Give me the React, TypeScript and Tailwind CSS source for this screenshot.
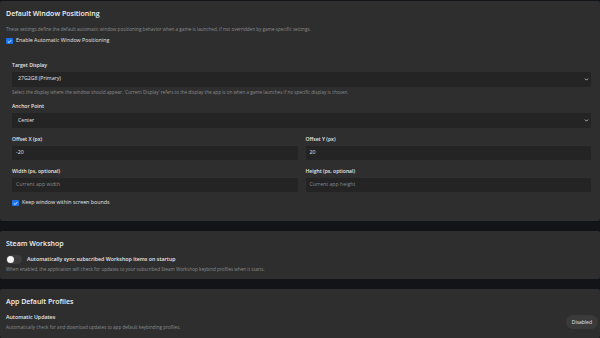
import { ChevronDown } from 'lucide-react';

const FONT = { fontFamily: '"Open Sans", "Noto Sans", sans-serif' };

function Check({ className = '' }: { className?: string }) {
  return (
    <span className={`flex h-[6.5px] w-[6.5px] shrink-0 items-center justify-center rounded-[1px] bg-[#1a73e8] ${className}`}>
      <svg viewBox="0 0 12 12" className="h-[5px] w-[5px]">
        <path d="M2.5 6.2 L5 8.6 L9.6 3.4" fill="none" stroke="#fff" strokeWidth="2" strokeLinecap="round" strokeLinejoin="round" />
      </svg>
    </span>
  );
}

function FieldLabel({ children }: { children: React.ReactNode }) {
  return <div className="text-[5.1px] font-semibold leading-[7px] text-[#e6e6e6]">{children}</div>;
}

function Select({ value }: { value: string }) {
  return (
    <div className="mt-[3px] flex h-[15px] items-center justify-between rounded-[1px] bg-[#242424] pl-[6px] pr-[2px]">
      <span className="text-[5.2px] text-[#e8e8e8]">{value}</span>
      <ChevronDown className="h-[5px] w-[5px] text-[#d8d8d8]" strokeWidth={4} />
    </div>
  );
}

function Input({ value, placeholder }: { value?: string; placeholder?: string }) {
  return (
    <div className="mt-[3px] flex h-[14.5px] items-center rounded-[1px] bg-[#242424] px-[4px]">
      {value ? (
        <span className="text-[5.2px] text-[#e8e8e8]">{value}</span>
      ) : (
        <span className="text-[5.2px] text-[#8a8a8a]">{placeholder}</span>
      )}
    </div>
  );
}

export default function App() {
  return (
    <div className="flex h-[338px] w-[600px] flex-col gap-[10px] overflow-hidden bg-[#131418] pt-[1px]" style={FONT}>
      {/* Default Window Positioning */}
      <section className="shrink-0 rounded-[2px] bg-[#2e2e2e] pb-[14px] pl-[6px] pr-[9px] pt-[8px]">
        <h2 className="text-[7px] font-semibold leading-[10px] text-[#f2f2f2]">Default Window Positioning</h2>
        <p className="mt-[6px] text-[4.6px] leading-[8px] text-[#8c8c8c]">
          These settings define the default automatic window positioning behavior when a game is launched, if not overridden by game-specific settings.
        </p>
        <div className="mt-[4px] flex h-[8px] items-center gap-[3.5px]">
          <Check />
          <span className="text-[5.3px] font-medium text-[#e6e6e6]">Enable Automatic Window Positioning</span>
        </div>

        <div className="mt-[16.5px] pl-[6px]">
          <FieldLabel>Target Display</FieldLabel>
          <Select value="27G2G8 (Primary)" />
          <p className="mt-[2.5px] text-[4.6px] leading-[7px] text-[#8c8c8c]">
            Select the display where the window should appear. 'Current Display' refers to the display the app is on when a game launches if no specific display is chosen.
          </p>
          <div className="mt-[7px]">
            <FieldLabel>Anchor Point</FieldLabel>
            <Select value="Center" />
          </div>

          <div className="mt-[7.5px] grid grid-cols-2 gap-x-[8px] gap-y-[7.5px]">
            <div>
              <FieldLabel>Offset X (px)</FieldLabel>
              <Input value="-20" />
            </div>
            <div>
              <FieldLabel>Offset Y (px)</FieldLabel>
              <Input value="20" />
            </div>
            <div>
              <FieldLabel>Width (ps, optional)</FieldLabel>
              <Input placeholder="Current app width" />
            </div>
            <div>
              <FieldLabel>Height (ps, optional)</FieldLabel>
              <Input placeholder="Current app height" />
            </div>
          </div>

          <div className="mt-[7px] flex h-[8px] items-center gap-[3.5px]">
            <Check />
            <span className="text-[5.3px] font-medium text-[#e6e6e6]">Keep window within screen bounds</span>
          </div>
        </div>
      </section>

      {/* Steam Workshop */}
      <section className="shrink-0 rounded-[2px] bg-[#2e2e2e] pb-[6px] pl-[6px] pr-[3px] pt-[8px]">
        <h2 className="text-[7px] font-semibold leading-[10px] text-[#f2f2f2]">Steam Workshop</h2>
        <div className="mt-[6px] flex h-[9px] items-center gap-[5px]">
          <span className="flex h-[9px] w-[16px] items-center rounded-full bg-[#3d3d3d] px-[1px]">
            <span className="h-[7px] w-[7px] rounded-full bg-[#f4f4f4]" />
          </span>
          <span className="text-[5.3px] font-semibold text-[#e6e6e6]">Automatically sync subscribed Workshop items on startup</span>
        </div>
        <p className="mt-[2px] text-[4.6px] leading-[7px] text-[#8c8c8c]">
          When enabled, the application will check for updates to your subscribed Steam Workshop keybind profiles when it starts.
        </p>
      </section>

      {/* App Default Profiles */}
      <section className="flex-1 rounded-[2px] bg-[#2e2e2e] pl-[6px] pr-[2px] pt-[8px]">
        <h2 className="text-[7px] font-semibold leading-[10px] text-[#f2f2f2]">App Default Profiles</h2>
        <div className="mt-[7px] flex items-center justify-between">
          <div>
            <div className="text-[5.3px] font-semibold leading-[7px] text-[#e6e6e6]">Automatic Updates</div>
            <p className="mt-[2.5px] text-[4.6px] leading-[7px] text-[#8c8c8c]">
              Automatically check for and download updates to app default keybinding profiles.
            </p>
          </div>
          <span className="flex h-[14px] items-center rounded-full bg-[#3a3a3a] px-[6px] text-[5px] font-medium text-[#e6e6e6]">
            Disabled
          </span>
        </div>
      </section>
    </div>
  );
}
